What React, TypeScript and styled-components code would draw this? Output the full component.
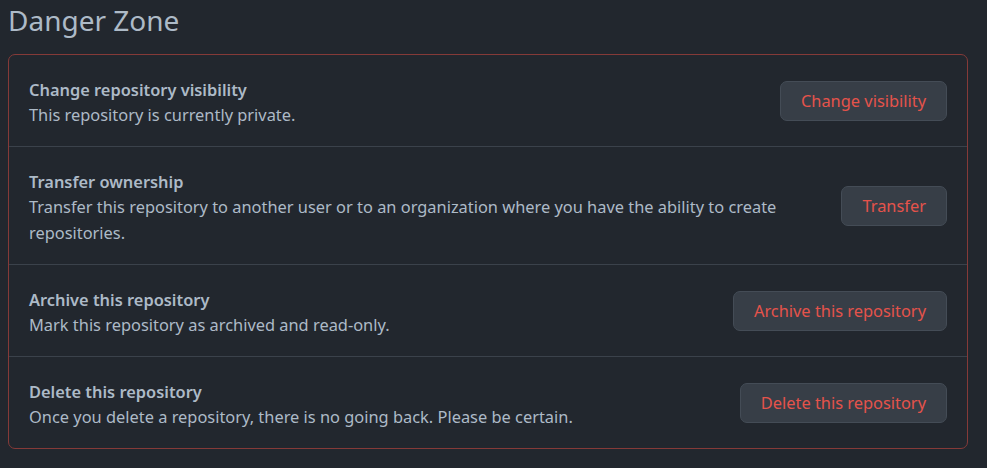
import styled, { createGlobalStyle } from "styled-components";

const GlobalStyle = createGlobalStyle`
  html, body {
    margin: 0;
    background: #22272e;
  }
  body {
    font-family: "Noto Sans", "Liberation Sans", sans-serif;
    color: #adbac7;
  }
`;

type Setting = {
  title: string;
  description: string;
  action: string;
};

const settings: Setting[] = [
  {
    title: "Change repository visibility",
    description: "This repository is currently private.",
    action: "Change visibility",
  },
  {
    title: "Transfer ownership",
    description:
      "Transfer this repository to another user or to an organization where you have the ability to create repositories.",
    action: "Transfer",
  },
  {
    title: "Archive this repository",
    description: "Mark this repository as archived and read-only.",
    action: "Archive this repository",
  },
  {
    title: "Delete this repository",
    description:
      "Once you delete a repository, there is no going back. Please be certain.",
    action: "Delete this repository",
  },
];

export default function App() {
  return (
    <>
      <GlobalStyle />
      <Page>
        <Heading>Danger Zone</Heading>
        <DangerBox>
          {settings.map((s) => (
            <Row key={s.title}>
              <Text>
                <Title>{s.title}</Title>
                <Description>{s.description}</Description>
              </Text>
              <DangerButton type="button">{s.action}</DangerButton>
            </Row>
          ))}
        </DangerBox>
      </Page>
    </>
  );
}

const Page = styled.div`
  padding: 0 8px;
  width: 960px;
`;

const Heading = styled.h2`
  margin: 0 0 14px;
  font-size: 28px;
  font-weight: 400;
  line-height: 40px;
  color: #adbac7;
`;

const DangerBox = styled.div`
  border: 1px solid #853a38;
  border-radius: 7px;
`;

const Row = styled.div`
  display: flex;
  align-items: center;
  gap: 20px;
  padding: 0 20px;

  & + & {
    border-top: 1px solid #3b424b;
  }
`;

const Text = styled.div`
  flex: 1;
  min-width: 0;
  padding: 22px 0 18px;
`;

const Title = styled.div`
  font-size: 16.4px;
  font-weight: 600;
  line-height: 25px;
`;

const Description = styled.div`
  font-size: 16.4px;
  line-height: 26px;
`;

const DangerButton = styled.button`
  flex-shrink: 0;
  height: 40px;
  padding: 0 20px;
  font-family: inherit;
  font-size: 16.4px;
  color: #e5534b;
  background: #373e47;
  border: 1px solid #444c56;
  border-radius: 7px;
  cursor: pointer;
`;
